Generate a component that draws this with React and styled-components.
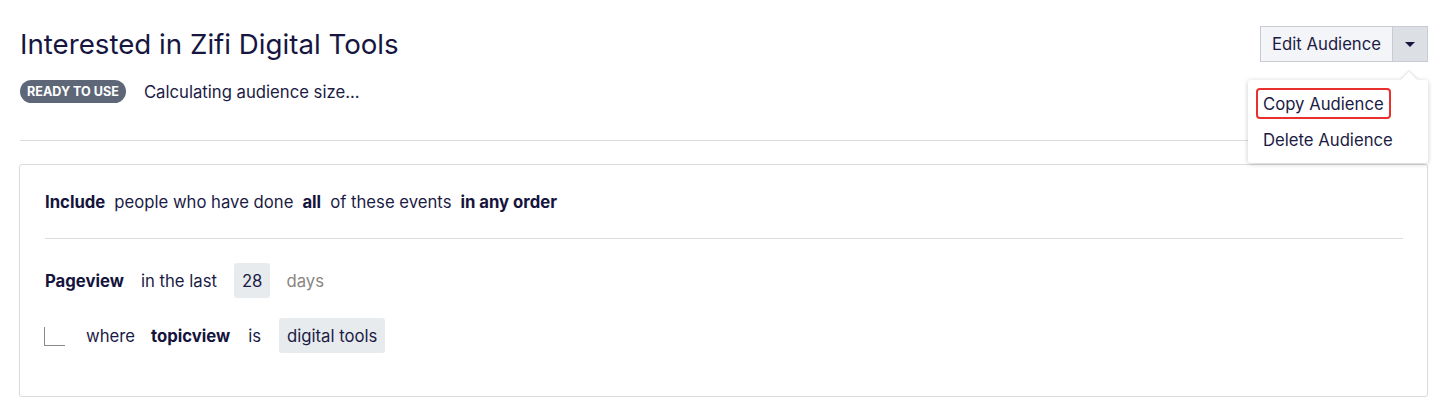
import React from "react";
import styled, { createGlobalStyle } from "styled-components";

const Global = createGlobalStyle`
  html, body { margin: 0; padding: 0; background: #fff; }
  body { font-family: Inter, "Noto Sans", sans-serif; color: #1b1b45; }
  * { box-sizing: border-box; }
`;

const Page = styled.div`
  padding: 26px 12px 0 20px;
`;

const Header = styled.div`
  display: flex;
  justify-content: space-between;
  align-items: flex-start;
`;

const TitleBlock = styled.div`
  display: flex;
  flex-direction: column;
`;

const Title = styled.h1`
  margin: 0;
  font-size: 27.7px;
  font-weight: 400;
  line-height: 36px;
  color: #16163f;
`;

const StatusRow = styled.div`
  display: flex;
  align-items: center;
  gap: 18px;
  margin-top: 18px;
`;

const Badge = styled.span`
  display: inline-flex;
  align-items: center;
  height: 23px;
  padding: 0 7px;
  border-radius: 12px;
  background: #5d6778;
  color: #fff;
  font-size: 12.6px;
  font-weight: 700;
`;

const StatusText = styled.span`
  font-size: 16.7px;
  color: #1b1b45;
`;

const Actions = styled.div`
  position: relative;
  display: flex;
`;

const SplitButton = styled.button`
  height: 36px;
  border: 1px solid #c8ccd2;
  background: ${(p) => (p.$toggle ? "#dcdfe4" : "#f3f5f8")};
  color: #1b1b45;
  font-family: inherit;
  font-size: 16.7px;
  padding: ${(p) => (p.$toggle ? "0" : "0 11px")};
  width: ${(p) => (p.$toggle ? "36px" : "auto")};
  display: flex;
  align-items: center;
  justify-content: center;
  margin-left: ${(p) => (p.$toggle ? "-1px" : "0")};
  cursor: pointer;
`;

const Caret = styled.span`
  width: 0;
  height: 0;
  border-left: 5px solid transparent;
  border-right: 5px solid transparent;
  border-top: 5px solid #16163f;
  margin-top: 1px;
`;

const Menu = styled.div`
  position: absolute;
  top: 54px;
  right: 0;
  width: 180px;
  background: #fff;
  border-radius: 3px;
  box-shadow: 0 1px 5px rgba(0, 0, 0, 0.22);
  padding: 8px;
  display: flex;
  flex-direction: column;
  gap: 5px;

  &::before {
    content: "";
    position: absolute;
    top: -6px;
    right: 13px;
    width: 12px;
    height: 12px;
    background: #fff;
    transform: rotate(45deg);
    box-shadow: -1px -1px 2px rgba(0, 0, 0, 0.12);
  }
`;

const MenuItem = styled.div`
  position: relative;
  font-size: 16.7px;
  color: #1b1b45;
  height: 31px;
  padding: 0 5px;
  border-radius: 4px;
  border: 2px solid ${(p) => (p.$focused ? "#e8302f" : "transparent")};
  align-self: flex-start;
  display: flex;
  align-items: center;
  white-space: nowrap;
`;

const Divider = styled.hr`
  border: none;
  border-top: 1px solid #dcdcdc;
  margin: ${(p) => p.$m || "0"};
`;

const Card = styled.div`
  margin-top: 23px;
  width: 1409px;
  margin-left: -1px;
  border: 1px solid #dcdcdc;
  border-radius: 3px;
  box-shadow: 0 1px 2px rgba(0, 0, 0, 0.06);
  padding: 24px 24px 43px 25px;
`;

const Line = styled.div`
  display: flex;
  align-items: center;
  font-size: 16.7px;
  color: #1b1b45;
  height: ${(p) => p.$h || "auto"};
  white-space: nowrap;
`;

const Strong = styled.span`
  font-weight: 700;
  color: #14143c;
  margin: ${(p) => p.$m || "0"};
`;

const Plain = styled.span`
  color: ${(p) => (p.$muted ? "#8a8580" : "#1b1b45")};
  margin: ${(p) => p.$m || "0"};
`;

const Chip = styled.span`
  display: inline-flex;
  align-items: center;
  height: 35px;
  padding: 0 8px;
  border-radius: 3px;
  background: #e8ebee;
  color: #1b1b45;
`;

const Branch = styled.span`
  width: 21px;
  height: 19px;
  border-left: 1px solid #8a8a8a;
  border-bottom: 1px solid #8a8a8a;
  margin: 0 21px 0 -1px;
  transform: translateY(1px);
`;

const Rows = styled.div`
  display: flex;
  flex-direction: column;
  gap: 20px;
  margin-top: 24px;
`;

export default function App() {
  return (
    <>
      <Global />
      <Page>
        <Header>
          <TitleBlock>
            <Title>Interested in Zifi Digital Tools</Title>
            <StatusRow>
              <Badge>READY TO USE</Badge>
              <StatusText>Calculating audience size...</StatusText>
            </StatusRow>
          </TitleBlock>
          <Actions>
            <SplitButton>Edit Audience</SplitButton>
            <SplitButton $toggle aria-label="More actions">
              <Caret />
            </SplitButton>
            <Menu>
              <MenuItem $focused>Copy Audience</MenuItem>
              <MenuItem>Delete Audience</MenuItem>
            </Menu>
          </Actions>
        </Header>
        <Divider $m="37px 0 0 0" />
        <Card>
          <Line $h="26px">
            <Strong>Include</Strong>
            <Plain $m="0 9px">people who have done</Plain>
            <Strong>all</Strong>
            <Plain $m="0 9px">of these events</Plain>
            <Strong>in any order</Strong>
          </Line>
          <Divider $m="23px 0 0 0" />
          <Rows>
            <Line>
              <Strong>Pageview</Strong>
              <Plain $m="0 17px 0 17px">in the last</Plain>
              <Chip>28</Chip>
              <Plain $muted $m="0 0 0 16px">days</Plain>
            </Line>
            <Line>
              <Branch />
              <Plain>where</Plain>
              <Strong $m="0 0 0 16px">topicview</Strong>
              <Plain $m="0 18px 0 18px">is</Plain>
              <Chip>digital tools</Chip>
            </Line>
          </Rows>
        </Card>
      </Page>
    </>
  );
}
